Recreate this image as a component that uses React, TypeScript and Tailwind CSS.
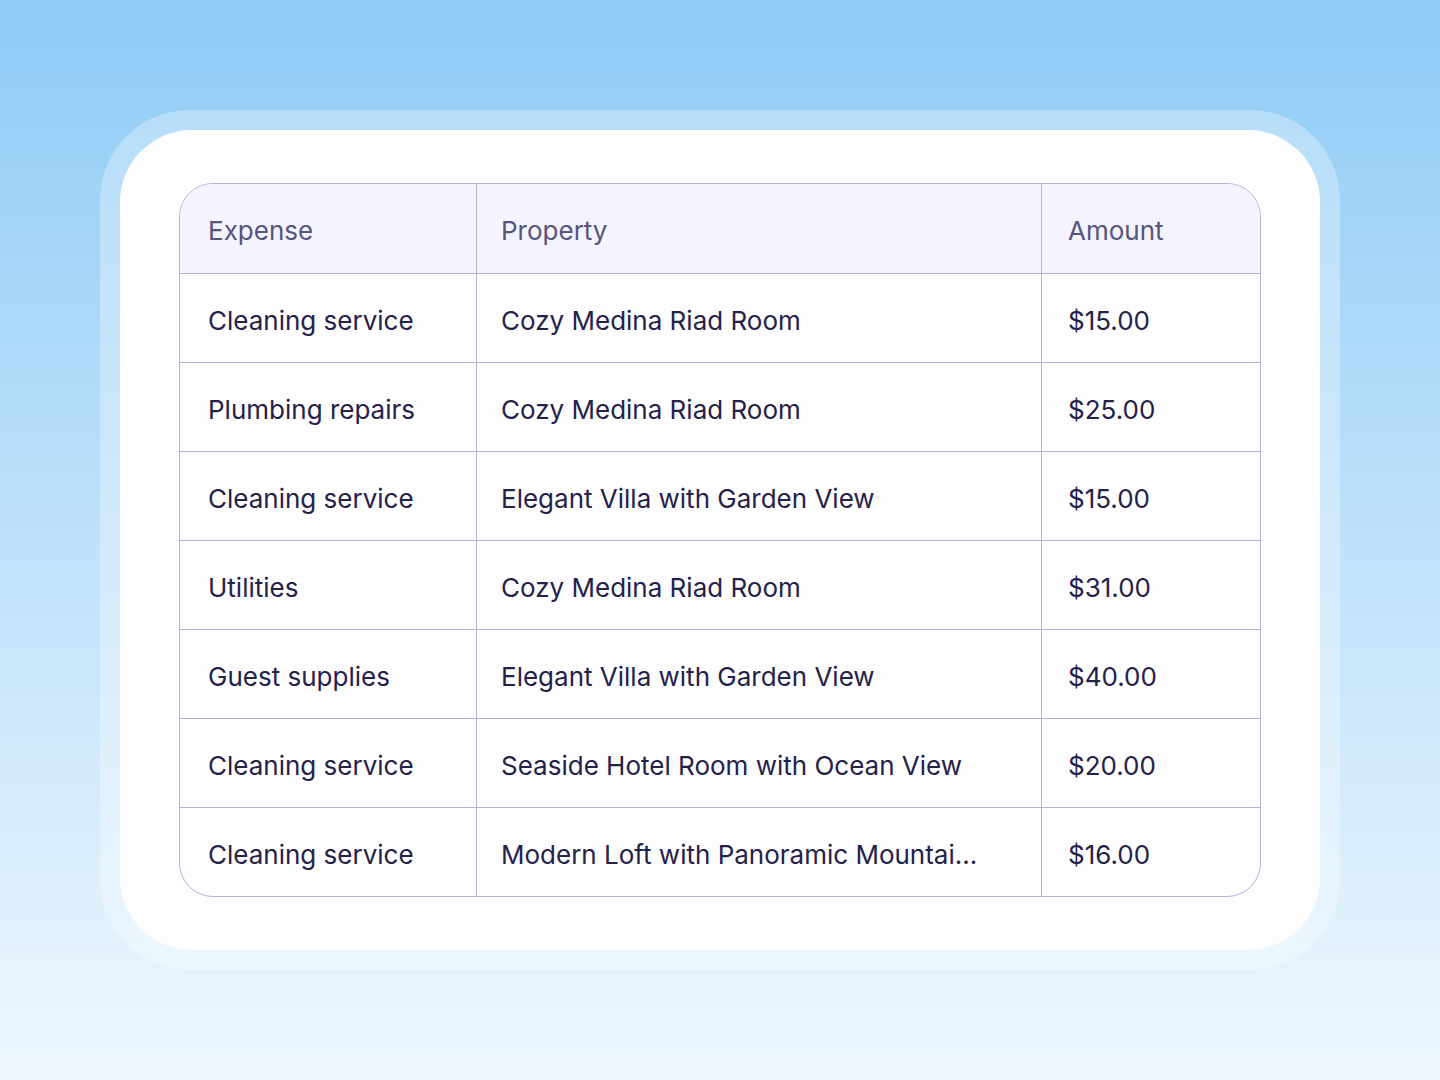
const rows = [
  { expense: "Cleaning service", property: "Cozy Medina Riad Room", amount: "$15.00" },
  { expense: "Plumbing repairs", property: "Cozy Medina Riad Room", amount: "$25.00" },
  { expense: "Cleaning service", property: "Elegant Villa with Garden View", amount: "$15.00" },
  { expense: "Utilities", property: "Cozy Medina Riad Room", amount: "$31.00" },
  { expense: "Guest supplies", property: "Elegant Villa with Garden View", amount: "$40.00" },
  { expense: "Cleaning service", property: "Seaside Hotel Room with Ocean View", amount: "$20.00" },
  { expense: "Cleaning service", property: "Modern Loft with Panoramic Mountai...", amount: "$16.00" },
];

export default function App() {
  return (
    <div
      className="h-[1080px] w-full bg-gradient-to-b from-[#8ecbf5] to-[#eef7fe] px-[100px] py-[110px]"
      style={{ fontFamily: "Inter, 'Noto Sans', sans-serif" }}
    >
      <div className="h-full rounded-[90px] bg-white/30 p-[20px]">
        <div className="h-full rounded-[72px] bg-[#fdfdfe] px-[59px] py-[53px]">
          <div className="overflow-hidden rounded-[34px] border border-[#b4b0dc]">
            <div className="grid grid-cols-[297px_565px_1fr] bg-[#f4f3ff] text-[26px] text-[#57557c]">
              <div className="flex h-[90px] items-center border-r border-b border-[#b4b0dc] pt-[3px] pl-[28px]">Expense</div>
              <div className="flex h-[90px] items-center border-r border-b border-[#b4b0dc] pt-[3px] pl-[24px]">Property</div>
              <div className="flex h-[90px] items-center border-b border-[#b4b0dc] pt-[3px] pl-[26px]">Amount</div>
            </div>
            {rows.map((r, i) => (
              <div
                key={i}
                className={`grid grid-cols-[297px_565px_1fr] text-[26px] text-[#25224a] ${
                  i < rows.length - 1 ? "border-b border-[#b4b0dc]" : ""
                }`}
              >
                <div className="flex h-[88px] items-center border-r border-[#b4b0dc] pt-[4px] pl-[28px]">{r.expense}</div>
                <div className="flex h-[88px] items-center border-r border-[#b4b0dc] pt-[4px] pl-[24px] whitespace-nowrap">{r.property}</div>
                <div className="flex h-[88px] items-center pt-[4px] pl-[26px]">{r.amount}</div>
              </div>
            ))}
          </div>
        </div>
      </div>
    </div>
  );
}
